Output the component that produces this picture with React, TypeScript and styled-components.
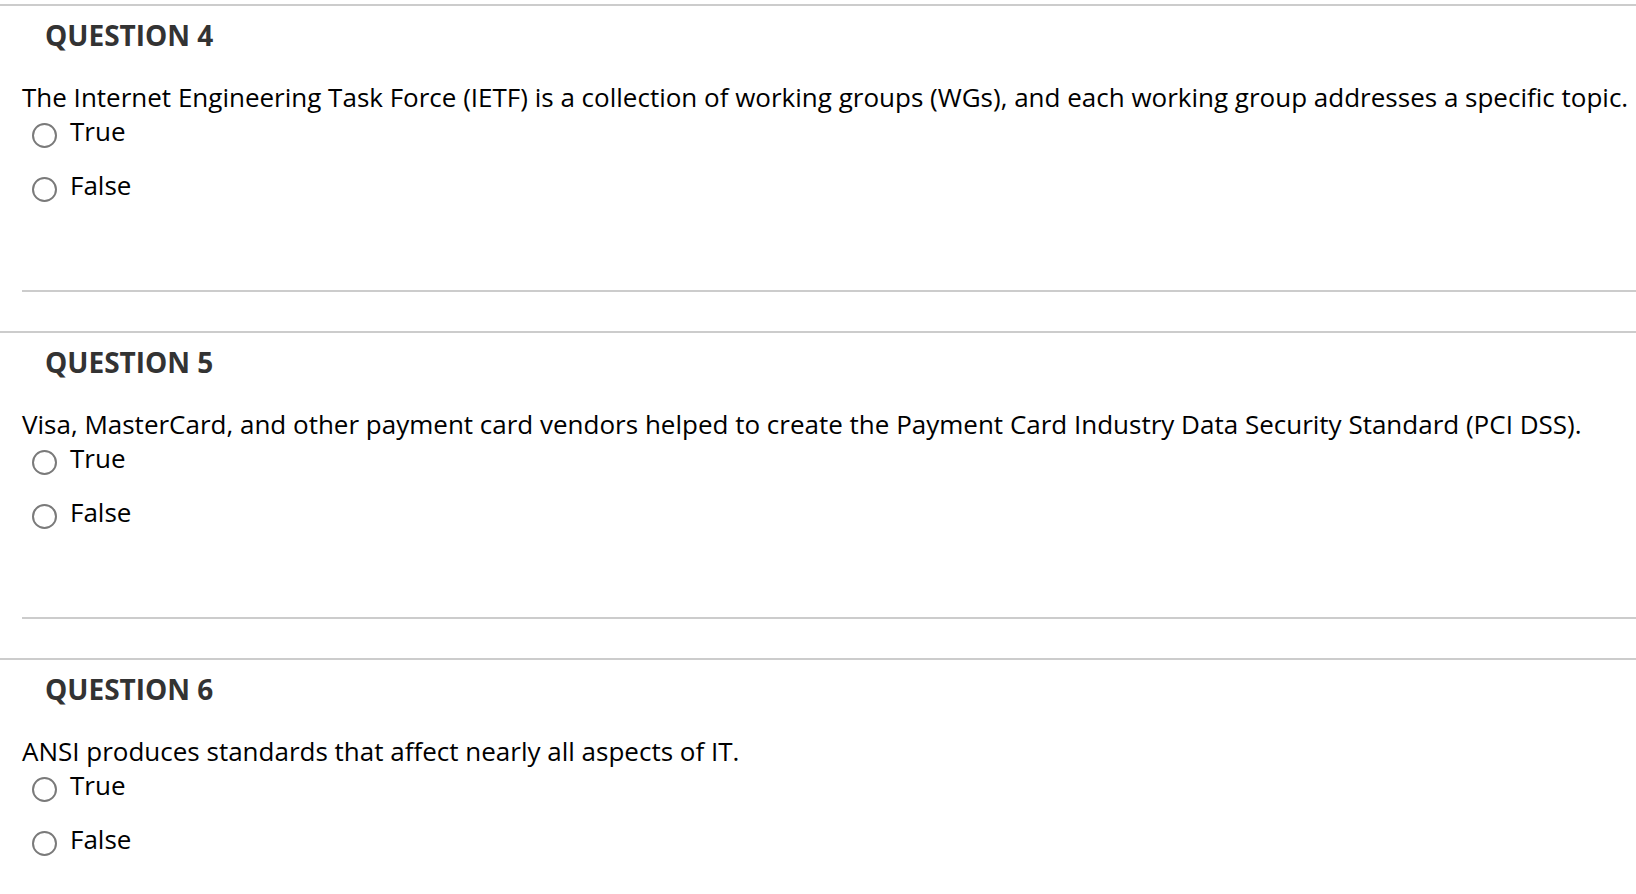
import * as React from 'react';
import styled, { createGlobalStyle } from 'styled-components';

const GlobalStyle = createGlobalStyle`
  html, body {
    margin: 0;
    padding: 0;
    background: #fff;
  }
  body {
    font-family: 'Open Sans', 'Noto Sans', sans-serif;
    overflow: hidden;
  }
`;

const questions = [
  {
    number: 4,
    text: 'The Internet Engineering Task Force (IETF) is a collection of working groups (WGs), and each working group addresses a specific topic.',
  },
  {
    number: 5,
    text: 'Visa, MasterCard, and other payment card vendors helped to create the Payment Card Industry Data Security Standard (PCI DSS).',
  },
  {
    number: 6,
    text: 'ANSI produces standards that affect nearly all aspects of IT.',
  },
];

export default function App() {
  return (
    <Page>
      <GlobalStyle />
      {questions.map((q) => (
        <Question key={q.number}>
          <Heading>QUESTION {q.number}</Heading>
          <Body>
            <Prompt>{q.text}</Prompt>
            <Options>
              {['True', 'False'].map((label) => (
                <Option key={label}>
                  <Radio type="radio" name={`q${q.number}`} />
                  <Label>{label}</Label>
                </Option>
              ))}
            </Options>
          </Body>
        </Question>
      ))}
    </Page>
  );
}

const Page = styled.div`
  padding-top: 4px;
`;

const Question = styled.section`
  border-top: 2px solid #cccccc;
  padding-top: 9px;
  margin-bottom: 39px;
`;

const Heading = styled.h3`
  margin: 0;
  padding-left: 45px;
  font-size: 28px;
  line-height: 40px;
  font-weight: 700;
  color: #333333;
`;

const Body = styled.div`
  margin: 25px 0 0 22px;
  padding-bottom: 88px;
  border-bottom: 2px solid #cccccc;
`;

const Prompt = styled.p`
  margin: 0;
  font-size: 26px;
  line-height: 34px;
  color: #000;
  white-space: nowrap;
`;

const Options = styled.div`
  display: flex;
  flex-direction: column;
  gap: 20px;
`;

const Option = styled.label`
  display: flex;
  align-items: flex-start;
  gap: 13px;
  padding-left: 10px;
  height: 34px;
`;

const Radio = styled.input`
  appearance: none;
  margin: 9px 0 0 0;
  width: 25px;
  height: 25px;
  box-sizing: border-box;
  border: 2px solid #7a7a7a;
  border-radius: 50%;
  background: #fff;
  flex-shrink: 0;
`;

const Label = styled.span`
  font-size: 26px;
  line-height: 34px;
  color: #000;
`;
